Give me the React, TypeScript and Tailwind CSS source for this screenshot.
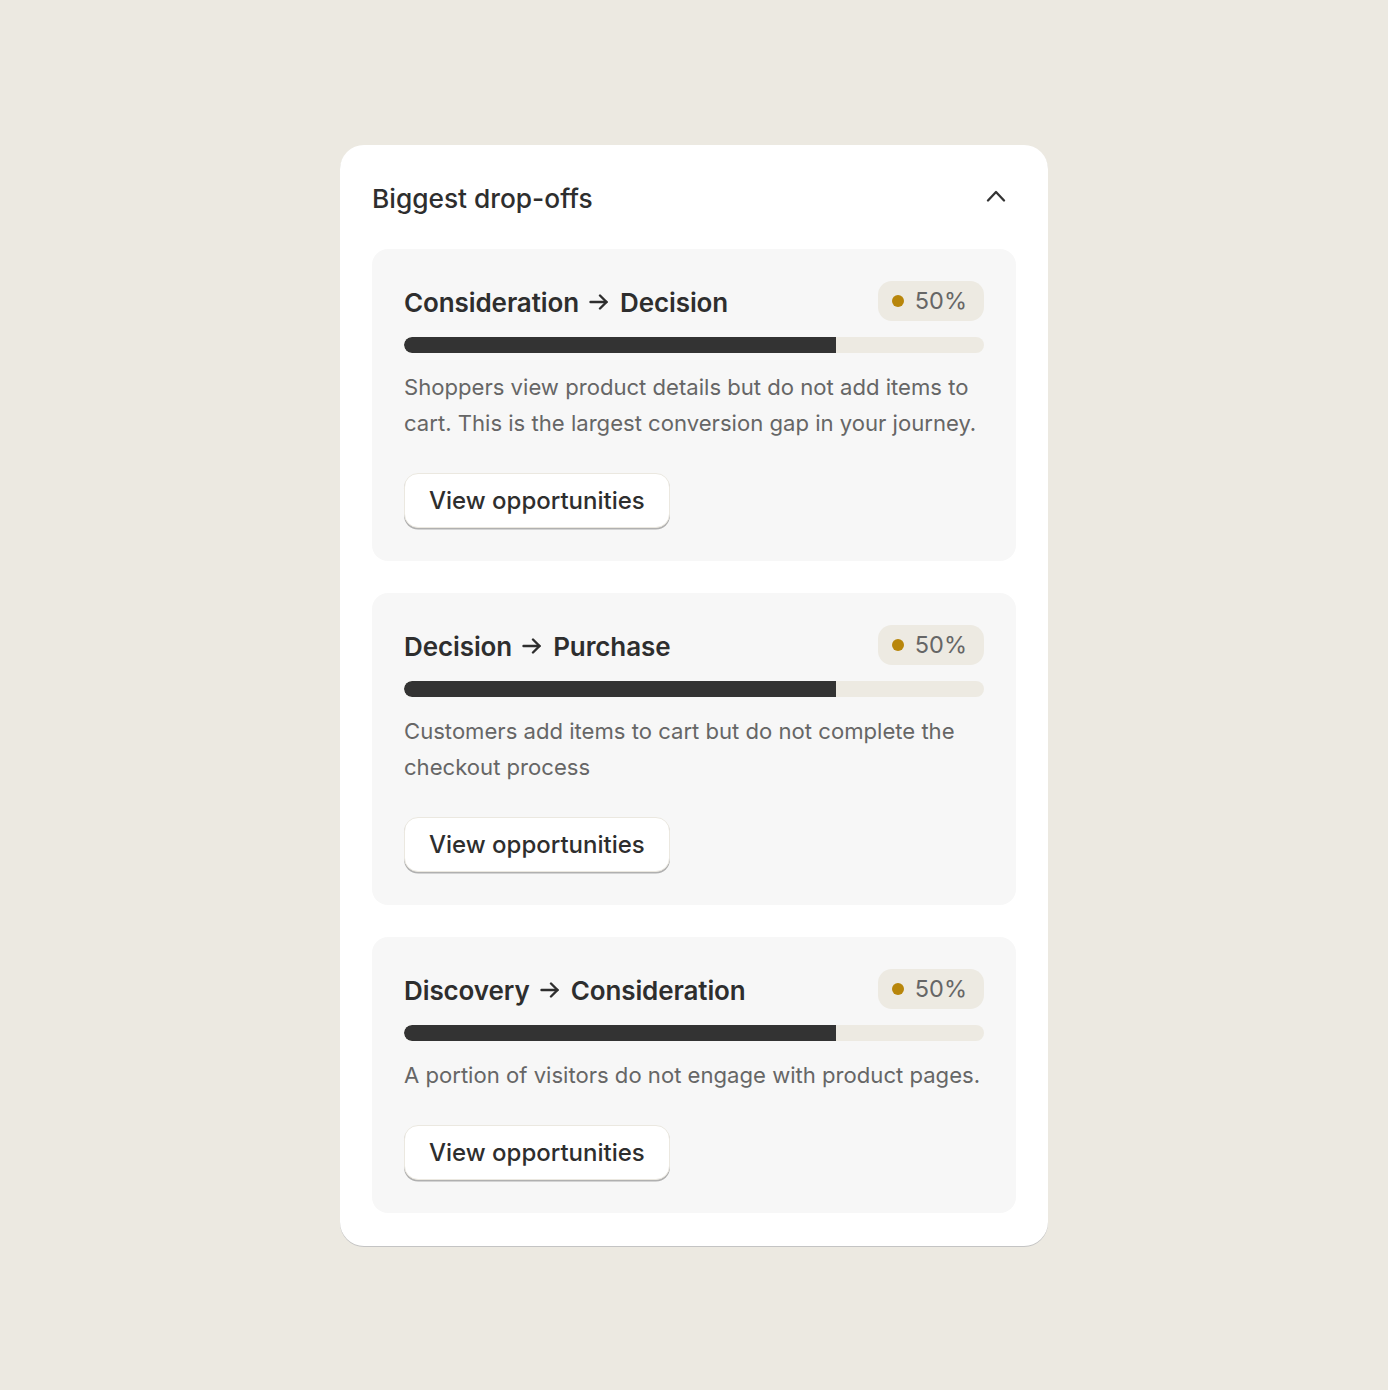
import React from "react";

interface DropOff {
  from: string;
  to: string;
  rate: number;
  fill: number; // width of the dark part of the bar, in percent
  description: string;
}

const dropOffs: DropOff[] = [
  {
    from: "Consideration",
    to: "Decision",
    rate: 50,
    fill: 74.5,
    description:
      "Shoppers view product details but do not add items to cart. This is the largest conversion gap in your journey.",
  },
  {
    from: "Decision",
    to: "Purchase",
    rate: 50,
    fill: 74.5,
    description: "Customers add items to cart but do not complete the checkout process",
  },
  {
    from: "Discovery",
    to: "Consideration",
    rate: 50,
    fill: 74.5,
    description: "A portion of visitors do not engage with product pages.",
  },
];

const ArrowRight = () => (
  <svg width="20" height="16" viewBox="0 0 20 16" fill="none" stroke="currentColor" strokeWidth="2.4" strokeLinecap="round" strokeLinejoin="round">
    <path d="M1.5 8h16" />
    <path d="M11 1.5l6.5 6.5-6.5 6.5" />
  </svg>
);

const ChevronUp = () => (
  <svg width="20" height="12" viewBox="0 0 20 12" fill="none" stroke="currentColor" strokeWidth="2.3" strokeLinecap="round" strokeLinejoin="round">
    <path d="M2 10.5l8-8.5 8 8.5" />
  </svg>
);

const DropOffCard: React.FC<{ item: DropOff }> = ({ item }) => (
  <div className="rounded-2xl bg-[#f7f7f7] p-8 pb-[33px]">
    <div className="flex items-center justify-between h-10">
      <h3 className="flex items-center text-[26px] font-semibold text-[#2e2e2e] tracking-[-0.1px] pt-[2px]">
        <span>{item.from}</span>
        <span className="ml-[10px] mr-[11px]">
          <ArrowRight />
        </span>
        <span>{item.to}</span>
      </h3>
      <div className="flex items-center gap-[11px] h-10 rounded-[14px] bg-[#edeae2] pl-[14px] pr-[17px]">
        <span className="w-3 h-3 rounded-full bg-[#b8860b]" />
        <span className="text-[23.5px] text-[#666666]">{item.rate}%</span>
      </div>
    </div>
    <div className="mt-4 h-4 w-full rounded-full bg-[#edeae2] overflow-hidden">
      <div className="h-full bg-[#333333] rounded-l-full" style={{ width: `${item.fill}%` }} />
    </div>
    <p className="mt-4 text-[22.1px] leading-[36px] text-[#666666]">{item.description}</p>
    <button className="mt-8 h-[55px] px-6 rounded-[14px] bg-white border border-[#ebe8e0] shadow-[0_1.5px_0_#b0b0b0] text-[24px] font-medium text-[#2e2e2e]">
      View opportunities
    </button>
  </div>
);

export default function App() {
  return (
    <div className="min-h-[1390px] bg-[#ece9e1] flex justify-center pt-[145px]" style={{ fontFamily: "Inter, 'Noto Sans', sans-serif" }}>
      <div className="w-[708px] self-start rounded-3xl bg-white px-8 pt-8 pb-[33px] shadow-[0_1px_0_#c4c4c4]">
        <div className="flex items-center justify-between h-10">
          <h2 className="text-[26.3px] font-medium text-[#2e2e2e] pt-[3px]">Biggest drop-offs</h2>
          <span className="text-[#333333] mr-[10px] mb-[2px]">
            <ChevronUp />
          </span>
        </div>
        <div className="mt-8 flex flex-col gap-8">
          {dropOffs.map((d) => (
            <DropOffCard key={d.from + d.to} item={d} />
          ))}
        </div>
      </div>
    </div>
  );
}
